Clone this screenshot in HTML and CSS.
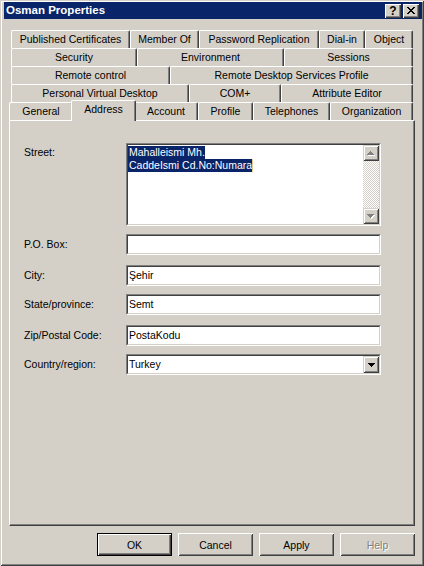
FILE: index.html
```html
<!DOCTYPE html>
<html>
<head>
<meta charset="utf-8">
<title>Osman Properties</title>
<link rel="stylesheet" href="styles.css">
</head>
<body>
<div class="window">
  <div class="titlebar">
    <span class="title">Osman Properties</span>
    <div class="caption-btns">
      <span class="cbtn help">?</span>
      <span class="cbtn">
        <svg width="8" height="7" viewBox="0 0 8 7" shape-rendering="crispEdges"><path fill="#000" d="M0 0h2v1H0z M6 0h2v1H6z M1 1h2v1H1z M5 1h2v1H5z M2 2h4v1H2z M3 3h2v1H3z M2 4h4v1H2z M1 5h2v1H1z M5 5h2v1H5z M0 6h2v1H0z M6 6h2v1H6z"/></svg>
      </span>
    </div>
  </div>

  <div class="tabs">
    <div class="tabrow r1">
      <div class="tab">Published Certificates</div>
      <div class="tab">Member Of</div>
      <div class="tab">Password Replication</div>
      <div class="tab">Dial-in</div>
      <div class="tab">Object</div>
    </div>
    <div class="tabrow r2">
      <div class="tab">Security</div>
      <div class="tab">Environment</div>
      <div class="tab">Sessions</div>
    </div>
    <div class="tabrow r3">
      <div class="tab">Remote control</div>
      <div class="tab">Remote Desktop Services Profile</div>
    </div>
    <div class="tabrow r4">
      <div class="tab">Personal Virtual Desktop</div>
      <div class="tab">COM+</div>
      <div class="tab">Attribute Editor</div>
    </div>
    <div class="tabrow r5">
      <div class="tab">General</div>
      <div class="tab sel">Address</div>
      <div class="tab">Account</div>
      <div class="tab">Profile</div>
      <div class="tab">Telephones</div>
      <div class="tab">Organization</div>
    </div>
  </div>

  <div class="panel">
    <div class="field-row top">
      <div class="label street">Street:</div>
      <div class="sunken multi">
        <div class="sunken-in multi-in">
          <div class="text-lines">
            <div class="line"><span class="hl">Mahalleismi Mh.</span></div>
            <div class="line"><span class="hl">CaddeIsmi Cd.No:Numara</span><span class="caret"></span></div>
          </div>
          <div class="vscroll">
            <div class="sbtn">
              <svg width="8" height="5" viewBox="0 0 8 5" shape-rendering="crispEdges"><path fill="#fff" d="M4 1h1v1H4z M3 2h3v1H3z M2 3h5v1H2z M1 4h7v1H1z"/><path fill="#808080" d="M3 0h1v1H3z M2 1h3v1H2z M1 2h5v1H1z M0 3h7v1H0z"/></svg>
            </div>
            <div class="track"></div>
            <div class="sbtn">
              <svg width="8" height="5" viewBox="0 0 8 5" shape-rendering="crispEdges"><path fill="#fff" d="M1 1h7v1H1z M2 2h5v1H2z M3 3h3v1H3z M4 4h1v1H4z"/><path fill="#808080" d="M0 0h7v1H0z M1 1h5v1H1z M2 2h3v1H2z M3 3h1v1H3z"/></svg>
            </div>
          </div>
        </div>
      </div>
    </div>

    <div class="field-row gap8">
      <div class="label">P.O. Box:</div>
      <div class="sunken"><div class="sunken-in"></div></div>
    </div>
    <div class="field-row gap10">
      <div class="label">City:</div>
      <div class="sunken"><div class="sunken-in">Şehir</div></div>
    </div>
    <div class="field-row gap8">
      <div class="label">State/province:</div>
      <div class="sunken"><div class="sunken-in">Semt</div></div>
    </div>
    <div class="field-row gap10">
      <div class="label">Zip/Postal Code:</div>
      <div class="sunken"><div class="sunken-in">PostaKodu</div></div>
    </div>
    <div class="field-row gap8">
      <div class="label">Country/region:</div>
      <div class="sunken"><div class="sunken-in combo-in">
        <span class="combo-text">Turkey</span>
        <span class="dropbtn">
          <svg width="7" height="4" viewBox="0 0 7 4" shape-rendering="crispEdges"><path fill="#000" d="M0 0h7v1H0z M1 1h5v1H1z M2 2h3v1H2z M3 3h1v1H3z"/></svg>
        </span>
      </div></div>
    </div>
  </div>

  <div class="btnbar">
    <div class="btn default">OK</div>
    <div class="btn">Cancel</div>
    <div class="btn">Apply</div>
    <div class="btn disabled">Help</div>
  </div>
</div>
</body>
</html>
```

FILE: styles.css
```css
html, body {
  margin: 0;
  padding: 0;
  background: #D4D0C8;
}

body {
  font-family: "Liberation Sans", Arial, sans-serif;
  font-size: 10.5px;
  color: #000;
}

.window {
  width: 424px;
  height: 566px;
  box-sizing: border-box;
  padding-top: 2px;
  background: #D4D0C8;
  box-shadow: inset 1px 1px #D4D0C8, inset -1px -1px #404040, inset 2px 2px #fff, inset -2px -2px #808080;
  overflow: hidden;
}

/* Title bar */
.titlebar {
  margin: 0 2px 0 4px;
  height: 17px;
  background: #0A246A;
  display: flex;
  align-items: center;
  justify-content: space-between;
  padding: 0 3px 0 2px;
}

.title {
  color: #fff;
  font-weight: bold;
  font-size: 11.5px;
  line-height: 17px;
}

.caption-btns {
  display: flex;
  gap: 2px;
}

.cbtn {
  width: 16px;
  height: 14px;
  box-sizing: border-box;
  background: #D4D0C8;
  display: flex;
  align-items: center;
  justify-content: center;
  box-shadow: inset 1px 1px #fff, inset -1px -1px #404040, inset -2px -2px #808080;
}

.cbtn.help {
  font-weight: bold;
  font-size: 12px;
  line-height: 14px;
  padding-top: 1px;
}

/* Tabs */
.tabs {
  margin-top: 11px;
}

.tabrow {
  display: grid;
  grid-template-rows: 18px;
}

.r1 { margin-left: 11px; grid-template-columns: 119px 69px 120px 46px 48px; }
.r2 { margin-left: 11px; grid-template-columns: 126px 147px 129px; }
.r3 { margin-left: 11px; grid-template-columns: 159px 243px; }
.r4 { margin-left: 11px; grid-template-columns: 178px 92px 132px; }
.r5 { margin-left: 9px; grid-template-columns: 64px 61px 64px 55px 77px 83px; }

.tab {
  box-sizing: border-box;
  background: #D4D0C8;
  border-top: 1px solid #fff;
  border-left: 1px solid #fff;
  border-right: 1px solid #404040;
  border-radius: 2px 2px 0 0;
  box-shadow: inset -1px 0 #808080;
  text-align: center;
  line-height: 16px;
  white-space: nowrap;
}

.tab.sel {
  position: relative;
  z-index: 2;
  margin: -2px -2px -1px -2px;
}

/* Panel */
.panel {
  margin: 0 9px;
  height: 406px;
  box-sizing: border-box;
  border-top: 1px solid #fff;
  border-left: 1px solid #fff;
  border-right: 1px solid #404040;
  border-bottom: 1px solid #404040;
  box-shadow: inset -1px -1px #808080;
  padding: 22px 0 0 14px;
}

.field-row {
  display: flex;
  align-items: center;
}

.field-row.top {
  align-items: flex-start;
}

.gap8 { margin-top: 8px; }
.gap10 { margin-top: 10px; }

.label {
  width: 102px;
  line-height: 13px;
}

.label.street {
  padding-top: 3px;
}

.sunken {
  width: 255px;
  height: 21px;
  box-sizing: border-box;
  border: 1px solid;
  border-color: #808080 #fff #fff #808080;
}

.sunken-in {
  height: 100%;
  box-sizing: border-box;
  border: 1px solid;
  border-color: #404040 #D4D0C8 #D4D0C8 #404040;
  background: #fff;
  padding-left: 1px;
  line-height: 17px;
}

.sunken.multi {
  height: 83px;
}

.multi-in {
  display: flex;
  padding-left: 0;
}

.text-lines {
  flex: 1;
  padding-top: 1px;
}

.line {
  height: 13px;
  line-height: 13px;
  display: flex;
}

.hl {
  background: #0A246A;
  color: #fff;
  padding-left: 1px;
  white-space: nowrap;
}

.caret {
  width: 1px;
  height: 13px;
  background: #E8C890;
}

.vscroll {
  width: 16px;
  display: flex;
  flex-direction: column;
}

.sbtn {
  height: 16px;
  box-sizing: border-box;
  background: #D4D0C8;
  display: flex;
  align-items: center;
  justify-content: center;
  box-shadow: inset 1px 1px #D4D0C8, inset -1px -1px #404040, inset 2px 2px #fff, inset -2px -2px #808080;
}

.track {
  flex: 1;
  background: repeating-conic-gradient(#fff 0 25%, #D4D0C8 0 50%) 0 0 / 2px 2px;
}

.combo-in {
  display: flex;
  align-items: center;
  justify-content: space-between;
  padding-left: 1px;
}

.dropbtn {
  width: 16px;
  height: 17px;
  box-sizing: border-box;
  background: #D4D0C8;
  display: flex;
  align-items: center;
  justify-content: center;
  box-shadow: inset 1px 1px #D4D0C8, inset -1px -1px #404040, inset 2px 2px #fff, inset -2px -2px #808080;
}

/* Buttons */
.btnbar {
  display: flex;
  justify-content: flex-end;
  gap: 6px;
  margin: 7px 9px 0 0;
}

.btn {
  width: 75px;
  height: 23px;
  box-sizing: border-box;
  display: flex;
  align-items: center;
  justify-content: center;
  background: #D4D0C8;
  box-shadow: inset 1px 1px #fff, inset -1px -1px #404040, inset 2px 2px #D4D0C8, inset -2px -2px #808080;
}

.btn.default {
  border: 1px solid #000;
  box-shadow: inset 1px 1px #fff, inset -1px -1px #404040, inset -2px -2px #808080;
}

.btn.disabled {
  color: #808080;
  text-shadow: 1px 1px #fff;
}
```
